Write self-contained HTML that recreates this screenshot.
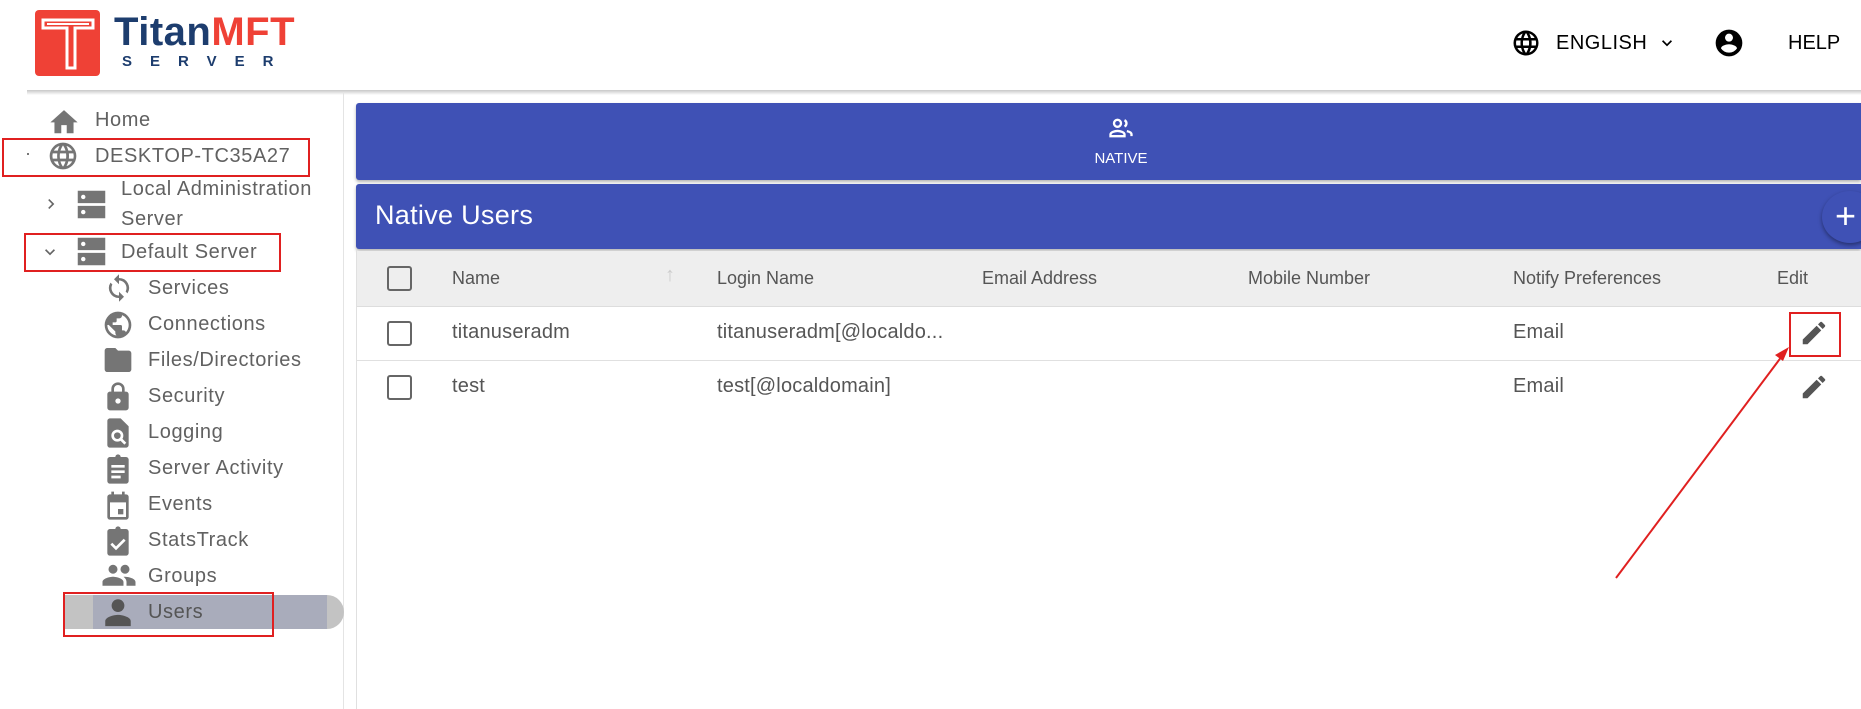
<!DOCTYPE html>
<html><head><meta charset="utf-8"><style>
*{margin:0;padding:0;box-sizing:border-box}
body{width:1861px;height:709px;overflow:hidden;background:#fff;font-family:"Liberation Sans",sans-serif;position:relative;color:#616161}
.abs{position:absolute}
.hdr{left:0;top:0;width:1861px;height:90px;background:#fff}
.shadow{left:27px;top:90px;width:1834px;height:5px;background:linear-gradient(#c8c8c8,#fff)}
.side{left:27px;top:92px;width:317px;height:617px;border-right:1px solid #e4e4e4}
.nav{position:absolute;font-size:20px;color:#616161;line-height:24px;white-space:nowrap;letter-spacing:0.6px}
.ic{position:absolute}
.red{position:absolute;border:2px solid #e02020}
.th{position:absolute;font-size:18px;color:#555;top:268px}
.td{position:absolute;font-size:20px;color:#555;letter-spacing:0.2px}
.cb{position:absolute;width:25px;height:25px;border:2px solid #666;border-radius:3px}
</style></head><body>
<div class="abs hdr"></div>
<svg class="abs" style="left:33px;top:10px" width="70" height="66" viewBox="0 0 70 66"><rect x="2" y="0" width="65" height="66" rx="4" fill="#ef4136"/><path d="M10 10 H60 V18 H42 V58 H34 V18 H10 Z" fill="none" stroke="#fff" stroke-width="3"/><path d="M14 14 H56" stroke="#fff" stroke-width="2"/></svg>
<div class="abs" style="left:114px;top:11px;font-size:40px;font-weight:bold;letter-spacing:0.5px;line-height:42px"><span style="color:#1d3d6e">Titan</span><span style="color:#ef4136">MFT</span></div>
<div class="abs" style="left:122px;top:53px;font-size:15px;font-weight:bold;color:#1d3d6e;letter-spacing:18px">SERVER</div>
<svg class="abs" style="left:1511px;top:28px" width="30" height="30" viewBox="0 0 24 24"><path fill="#000" d="M12 2a10 10 0 100 20 10 10 0 000-20zm6.9 6h-2.9a15.7 15.7 0 00-1.4-3.6A8 8 0 0118.9 8zM12 4c.8 1.2 1.5 2.5 1.9 4h-3.8c.4-1.4 1.1-2.8 1.9-4zM4.3 14a8.2 8.2 0 010-4h3.4a16.5 16.5 0 000 4H4.3zm.8 2h3a15.7 15.7 0 001.3 3.6A8 8 0 015.1 16zm3-8h-3a8 8 0 014.3-3.6C8.8 5.5 8.4 6.7 8.1 8zM12 20c-.8-1.2-1.5-2.5-1.9-4h3.8c-.4 1.4-1.1 2.8-1.9 4zm2.3-6H9.7a14.7 14.7 0 010-4h4.6a14.7 14.7 0 010 4zm.3 5.6c.6-1.1 1.1-2.3 1.4-3.6h2.9a8 8 0 01-4.3 3.6zm1.8-5.6a16.5 16.5 0 000-4h3.4a8.2 8.2 0 010 4h-3.4z"/></svg>
<div class="abs" style="left:1556px;top:32px;font-size:20px;color:#000;letter-spacing:0.5px">ENGLISH</div>
<svg class="abs" style="left:1657px;top:33px" width="20" height="20" viewBox="0 0 24 24"><path d="M7.4 8.6L12 13.2l4.6-4.6L18 10l-6 6-6-6z" fill="#000"/></svg>
<svg class="abs" style="left:1713px;top:27px" width="32" height="32" viewBox="0 0 24 24"><path fill="#000" d="M12 2a10 10 0 100 20 10 10 0 000-20zm0 3a3 3 0 110 6 3 3 0 010-6zm0 14.2a7.2 7.2 0 01-6-3.2c0-2 4-3.1 6-3.1s6 1.1 6 3.1a7.2 7.2 0 01-6 3.2z"/></svg>
<div class="abs" style="left:1788px;top:32px;font-size:20px;color:#000">HELP</div>
<div class="abs shadow"></div>
<div class="abs side"></div>
<svg class="ic" style="left:47px;top:106px" width="34" height="30" viewBox="0 0 24 22"><path d="M10 20v-6h4v6h5v-8h3L12 3 2 12h3v8z" fill="#757575"/></svg>
<div class="nav" style="left:95px;top:108px">Home</div>
<div class="ic" style="left:27px;top:153px;width:2px;height:2px;background:#777"></div>
<svg class="ic" style="left:47px;top:140px" width="32" height="32" viewBox="0 0 24 24"><path fill="#757575" d="M12 2a10 10 0 100 20 10 10 0 000-20zm6.9 6h-2.9a15.7 15.7 0 00-1.4-3.6A8 8 0 0118.9 8zM12 4c.8 1.2 1.5 2.5 1.9 4h-3.8c.4-1.4 1.1-2.8 1.9-4zM4.3 14a8.2 8.2 0 010-4h3.4a16.5 16.5 0 000 4H4.3zm.8 2h3a15.7 15.7 0 001.3 3.6A8 8 0 015.1 16zm3-8h-3a8 8 0 014.3-3.6C8.8 5.5 8.4 6.7 8.1 8zM12 20c-.8-1.2-1.5-2.5-1.9-4h3.8c-.4 1.4-1.1 2.8-1.9 4zm2.3-6H9.7a14.7 14.7 0 010-4h4.6a14.7 14.7 0 010 4zm.3 5.6c.6-1.1 1.1-2.3 1.4-3.6h2.9a8 8 0 01-4.3 3.6zm1.8-5.6a16.5 16.5 0 000-4h3.4a8.2 8.2 0 010 4h-3.4z"/></svg>
<div class="nav" style="left:95px;top:144px">DESKTOP-TC35A27</div>
<svg class="ic" style="left:41px;top:194px" width="20" height="20" viewBox="0 0 24 24"><path d="M8.6 16.6L13.2 12 8.6 7.4 10 6l6 6-6 6z" fill="#666"/></svg>
<svg class="ic" style="left:75px;top:188px" width="33" height="33" viewBox="0 0 24 24"><path fill="#757575" d="M2 2h20v9H2zM2 13h20v9H2z"/><circle cx="6" cy="6.5" r="1.6" fill="#fff"/><circle cx="6" cy="17.5" r="1.6" fill="#fff"/></svg>
<div class="nav" style="left:121px;top:177px">Local Administration</div>
<div class="nav" style="left:121px;top:207px">Server</div>
<svg class="ic" style="left:40px;top:242px" width="20" height="20" viewBox="0 0 24 24"><path d="M7.4 8.6L12 13.2l4.6-4.6L18 10l-6 6-6-6z" fill="#666"/></svg>
<svg class="ic" style="left:75px;top:235px" width="33" height="33" viewBox="0 0 24 24"><path fill="#757575" d="M2 2h20v9H2zM2 13h20v9H2z"/><circle cx="6" cy="6.5" r="1.6" fill="#fff"/><circle cx="6" cy="17.5" r="1.6" fill="#fff"/></svg>
<div class="nav" style="left:121px;top:240px">Default Server</div>

<svg class="ic" style="left:104px;top:273px" width="30" height="30" viewBox="0 0 24 24"><path fill="#757575" d="M12 4V1L8 5l4 4V6c3.3 0 6 2.7 6 6 0 1-.3 2-.7 2.8l1.5 1.5A8 8 0 0012 4zm0 14c-3.3 0-6-2.7-6-6 0-1 .3-2 .7-2.8L5.2 7.7A8 8 0 0012 20v3l4-4-4-4z"/></svg>
<div class="nav" style="left:148px;top:276px">Services</div>
<svg class="ic" style="left:102px;top:309px" width="32" height="32" viewBox="0 0 24 24"><path fill="#757575" d="M12 2a10 10 0 100 20 10 10 0 000-20zm-1 17.9A8 8 0 014 12l1-.1 5 5v1c0 1.1.9 2 1 2zm6.9-2.5A2 2 0 0016 16h-1v-3c0-.6-.4-1-1-1H8v-2h2c.6 0 1-.4 1-1V7h2c1.1 0 2-.9 2-2v-.4a8 8 0 012.9 12.8z"/></svg>
<div class="nav" style="left:148px;top:312px">Connections</div>
<svg class="ic" style="left:102px;top:345px" width="32" height="30" viewBox="0 0 24 22"><path fill="#757575" d="M10 2H4C2.9 2 2 2.9 2 4v14c0 1.1.9 2 2 2h16c1.1 0 2-.9 2-2V6c0-1.1-.9-2-2-2h-8z"/></svg>
<div class="nav" style="left:148px;top:348px">Files/Directories</div>
<svg class="ic" style="left:104px;top:381px" width="28" height="32" viewBox="0 0 20 24"><path fill="#757575" d="M16 8h-1V6A5 5 0 005 6v2H4C2.9 8 2 8.9 2 10v10c0 1.1.9 2 2 2h12c1.1 0 2-.9 2-2V10c0-1.1-.9-2-2-2zm-6 9a2 2 0 110-4 2 2 0 010 4zm3-9H7V6a3 3 0 016 0z"/></svg>
<div class="nav" style="left:148px;top:384px">Security</div>
<svg class="ic" style="left:104px;top:417px" width="28" height="32" viewBox="0 0 20 24"><path fill="#757575" d="M12 1H4C2.9 1 2 1.9 2 3v18c0 1.1.9 2 2 2h12c1.1 0 2-.9 2-2V7z"/><circle cx="9.5" cy="14" r="3.5" fill="none" stroke="#fff" stroke-width="2"/><path d="M12 16.5l3.5 3.5" stroke="#fff" stroke-width="2"/></svg>
<div class="nav" style="left:148px;top:420px">Logging</div>
<svg class="ic" style="left:104px;top:453px" width="28" height="32" viewBox="0 0 20 24"><path fill="#757575" d="M16 3h-4a2 2 0 00-4 0H4C2.9 3 2 3.9 2 5v16c0 1.1.9 2 2 2h12c1.1 0 2-.9 2-2V5c0-1.1-.9-2-2-2z"/><path d="M5 10h10M5 14h10M5 18h7" stroke="#fff" stroke-width="2"/></svg>
<div class="nav" style="left:148px;top:456px">Server Activity</div>
<svg class="ic" style="left:104px;top:489px" width="28" height="32" viewBox="0 0 20 24"><path fill="#757575" d="M16 4h-1V2h-2v2H7V2H5v2H4C2.9 4 2 4.9 2 6v15c0 1.1.9 2 2 2h12c1.1 0 2-.9 2-2V6c0-1.1-.9-2-2-2zm0 17H4V10h12z"/><rect x="10" y="15" width="4" height="4" fill="#757575"/></svg>
<div class="nav" style="left:148px;top:492px">Events</div>
<svg class="ic" style="left:104px;top:525px" width="28" height="32" viewBox="0 0 20 24"><path fill="#757575" d="M16 3h-4a2 2 0 00-4 0H4C2.9 3 2 3.9 2 5v16c0 1.1.9 2 2 2h12c1.1 0 2-.9 2-2V5c0-1.1-.9-2-2-2z"/><path d="M5 14l3.5 3.5L15 11" stroke="#fff" stroke-width="2" fill="none"/></svg>
<div class="nav" style="left:148px;top:528px">StatsTrack</div>
<svg class="ic" style="left:101px;top:563px" width="36" height="26" viewBox="0 0 24 17"><path fill="#757575" d="M16 7a3 3 0 100-6 3 3 0 000 6zM8 7a3 3 0 100-6 3 3 0 000 6zm0 2c-2.3 0-7 1.2-7 3.5V15h14v-2.5C15 10.2 10.3 9 8 9zm8 0c-.3 0-.6 0-1 .1 1.2.8 2 2 2 3.4V15h6v-2.5C23 10.2 18.3 9 16 9z"/></svg>
<div class="nav" style="left:148px;top:564px">Groups</div>
<div class="abs" style="left:63px;top:595px;width:281px;height:34px;background:#c3c3c3;border-radius:0 17px 17px 0"></div>
<div class="abs" style="left:93px;top:595px;width:234px;height:34px;background:#a9acbb"></div>
<svg class="ic" style="left:101px;top:596px" width="34" height="32" viewBox="0 0 24 22"><path fill="#555" d="M12 11a4.5 4.5 0 100-9 4.5 4.5 0 000 9zm0 2c-3 0-9 1.5-9 4.5V21h18v-3.5c0-3-6-4.5-9-4.5z"/></svg>
<div class="nav" style="left:148px;top:600px;color:#555">Users</div>

<div class="red" style="left:2px;top:138px;width:308px;height:39px"></div>
<div class="red" style="left:24px;top:233px;width:257px;height:39px"></div>
<div class="red" style="left:63px;top:592px;width:211px;height:45px"></div>

<div class="abs" style="left:356px;top:103px;width:1505px;height:77px;background:#3f51b5;border-radius:3px 0 0 3px;box-shadow:0 2px 3px rgba(0,0,0,.3)"></div>
<svg class="ic" style="left:1107px;top:114px" width="28" height="28" viewBox="0 0 24 24"><path fill="none" stroke="#fff" stroke-width="2" d="M9 11a3 3 0 100-6 3 3 0 000 6zM3 19v-1.5c0-2 4-3 6-3s6 1 6 3V19zM15 5.3a3 3 0 010 5.4M17 14.7c2 .4 4 1.3 4 2.8V19"/></svg>
<div class="abs" style="left:1089px;top:150px;font-size:15px;color:#fff;width:64px;text-align:center">NATIVE</div>
<div class="abs" style="left:356px;top:184px;width:1505px;height:65px;background:#3f51b5;border-radius:3px 0 0 3px;box-shadow:0 2px 3px rgba(0,0,0,.3)"></div>
<div class="abs" style="left:375px;top:200px;font-size:27px;color:#fff;letter-spacing:0.3px">Native Users</div>
<div class="abs" style="left:1822px;top:191px;width:56px;height:52px;border-radius:50%;background:#3f51b5;box-shadow:0 2px 4px rgba(0,0,0,.4)"></div>
<div class="abs" style="left:1835px;top:196px;font-size:36px;color:#fff;line-height:40px">+</div>
<div class="abs" style="left:356px;top:250px;width:1505px;height:459px;border-left:1px solid #e0e0e0"></div>
<div class="abs" style="left:357px;top:251px;width:1504px;height:56px;background:#eeeeee;border-bottom:1px solid #ddd"></div>
<div class="cb" style="left:387px;top:266px"></div>
<div class="th" style="left:452px">Name</div>
<div class="th" style="left:665px;color:#ccc;font-size:20px;top:264px">↑</div>
<div class="th" style="left:717px">Login Name</div>
<div class="th" style="left:982px">Email Address</div>
<div class="th" style="left:1248px">Mobile Number</div>
<div class="th" style="left:1513px">Notify Preferences</div>
<div class="th" style="left:1777px">Edit</div>
<div class="abs" style="left:357px;top:360px;width:1504px;height:1px;background:#e0e0e0"></div>
<div class="cb" style="left:387px;top:321px"></div>
<div class="td" style="left:452px;top:321px">titanuseradm</div>
<div class="td" style="left:717px;top:321px">titanuseradm[@localdo...</div>
<div class="td" style="left:1513px;top:321px">Email</div>
<svg class="ic" style="left:1799px;top:318px" width="30" height="30" viewBox="0 0 24 24"><path fill="#555" d="M3 17.2V21h3.8L17.8 9.9l-3.7-3.7zM20.7 7a1 1 0 000-1.4l-2.3-2.3a1 1 0 00-1.4 0l-1.8 1.8 3.7 3.7z"/></svg>
<div class="cb" style="left:387px;top:375px"></div>
<div class="td" style="left:452px;top:375px">test</div>
<div class="td" style="left:717px;top:375px">test[@localdomain]</div>
<div class="td" style="left:1513px;top:375px">Email</div>
<svg class="ic" style="left:1799px;top:372px" width="30" height="30" viewBox="0 0 24 24"><path fill="#555" d="M3 17.2V21h3.8L17.8 9.9l-3.7-3.7zM20.7 7a1 1 0 000-1.4l-2.3-2.3a1 1 0 00-1.4 0l-1.8 1.8 3.7 3.7z"/></svg>
<div class="red" style="left:1789px;top:312px;width:52px;height:45px"></div>
<svg class="abs" style="left:0;top:0" width="1861" height="709"><line x1="1616" y1="578" x2="1785" y2="352" stroke="#e02020" stroke-width="2"/><path d="M1789 347 L1775 355 L1783 361 Z" fill="#e02020"/></svg>
</body></html>
